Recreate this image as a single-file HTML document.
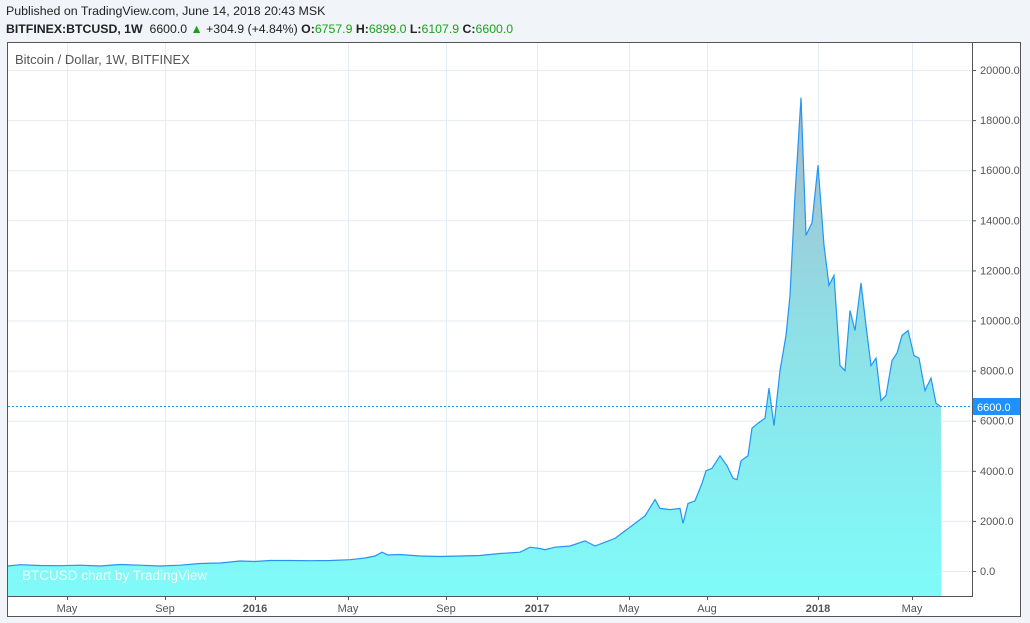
<!DOCTYPE html>
<html><head><meta charset="utf-8"><style>
body{margin:0;width:1030px;height:623px;background:#f1f4f8;font-family:"Liberation Sans",sans-serif;position:relative;overflow:hidden}
.t1{position:absolute;left:6px;top:4px;font-size:12.4px;color:#222}
.t2{position:absolute;left:6px;top:22px;font-size:12.3px;color:#222}
.g{color:#1aa31a}
svg{position:absolute;left:0;top:0}
</style></head><body>
<div class="t1">Published on TradingView.com, June 14, 2018 20:43 MSK</div>
<div class="t2"><b>BITFINEX:BTCUSD, 1W</b>&nbsp; 6600.0 <span class="g">▲</span> +304.9 (+4.84%) <b>O:</b><span class="g">6757.9</span> <b>H:</b><span class="g">6899.0</span> <b>L:</b><span class="g">6107.9</span> <b>C:</b><span class="g">6600.0</span></div>
<svg id="s" width="1030" height="623" xmlns="http://www.w3.org/2000/svg">
<defs><linearGradient id="gr" x1="0" y1="0" x2="0" y2="1"><stop offset="0" stop-color="#a7b9cc"/><stop offset="0.45" stop-color="#8fdfe6"/><stop offset="1" stop-color="#7ffbf9"/></linearGradient></defs>
<rect x="7.5" y="42.5" width="1013" height="574" fill="#fff" stroke="#555"/>
<g id="grid" stroke="#e4ebf2" stroke-width="1"></g>
<path id="area" fill="url(#gr)"/>
<path id="line" fill="none" stroke="#2196f3" stroke-width="1.2"/>
<line x1="8" y1="406.5" x2="972" y2="406.5" stroke="#2196f3" stroke-dasharray="2,2"/>
<line x1="972.5" y1="43" x2="972.5" y2="597" stroke="#555"/>
<line x1="8" y1="596.5" x2="972" y2="596.5" stroke="#555"/>
<g id="lab" font-size="11" fill="#555"></g>
<text x="15" y="64" font-size="13" fill="#555">Bitcoin / Dollar, 1W, BITFINEX</text>
<text x="22" y="580" font-size="13.5" fill="#fff" opacity="0.9">BTCUSD chart by TradingView</text>
<rect x="973" y="398" width="47" height="17" fill="#1e90ff"/>
<text x="977" y="411" font-size="11" fill="#fff">6600.0</text>
</svg>
<script>
var Y=function(v){return 571-v*0.02505};
var ns="http://www.w3.org/2000/svg",g=document.getElementById('grid'),lab=document.getElementById('lab');
function el(p,t,a,txt){var e=document.createElementNS(ns,t);for(var k in a)e.setAttribute(k,a[k]);if(txt)e.textContent=txt;p.appendChild(e);return e;}
for(var v=0;v<=20000;v+=2000){var y=Y(v);el(g,'line',{x1:8,x2:972,y1:y+.5,y2:y+.5});el(lab,'line',{x1:972,x2:976,y1:y+.5,y2:y+.5,stroke:'#555'});el(lab,'text',{x:980,y:y+4},v.toFixed(1));}
var xs=[[67,'May'],[165,'Sep'],[255,'2016'],[348,'May'],[446,'Sep'],[537,'2017'],[629,'May'],[707,'Aug'],[818,'2018'],[912,'May']];
xs.forEach(function(a){el(g,'line',{x1:a[0]+.5,x2:a[0]+.5,y1:43,y2:596});el(lab,'line',{x1:a[0]+.5,x2:a[0]+.5,y1:596,y2:600,stroke:'#555'});var t=el(lab,'text',{x:a[0],y:612,'text-anchor':'middle'},a[1]);if(/^20/.test(a[1]))t.setAttribute('font-weight','bold');});
var p=[[8,200],[20,250],[40,220],[60,210],[80,230],[100,200],[120,260],[140,230],[160,200],[180,230],[200,300],[220,320],[240,400],[255,380],[270,420],[290,420],[310,410],[330,420],[350,450],[365,520],[375,600],[382,750],[388,640],[400,660],[420,600],[440,580],[460,600],[480,620],[500,700],[520,750],[530,950],[540,900],[545,850],[555,950],[570,1000],[585,1200],[595,1000],[605,1150],[615,1300],[625,1600],[635,1900],[645,2200],[655,2850],[660,2500],[670,2450],[680,2500],[683,1900],[688,2700],[695,2800],[702,3500],[706,4000],[712,4100],[720,4600],[727,4200],[733,3700],[737,3650],[741,4400],[748,4600],[752,5700],[758,5900],[765,6100],[769,7300],[774,5800],[780,8000],[786,9400],[790,11000],[795,15000],[801,18900],[806,13400],[812,13900],[818,16200],[824,13000],[829,11400],[834,11800],[840,8200],[845,8000],[850,10400],[855,9600],[861,11500],[866,9800],[871,8200],[876,8500],[881,6800],[886,7000],[892,8400],[897,8700],[902,9400],[908,9600],[914,8600],[919,8500],[925,7200],[931,7700],[936,6700],[941,6550]];
var d=p.map(function(q,i){return (i?'L':'M')+q[0]+' '+Y(q[1]).toFixed(1)}).join(' ');
document.getElementById('line').setAttribute('d',d);
document.getElementById('area').setAttribute('d',d+' L941 596 L8 596 Z');
</script>
</body></html>
